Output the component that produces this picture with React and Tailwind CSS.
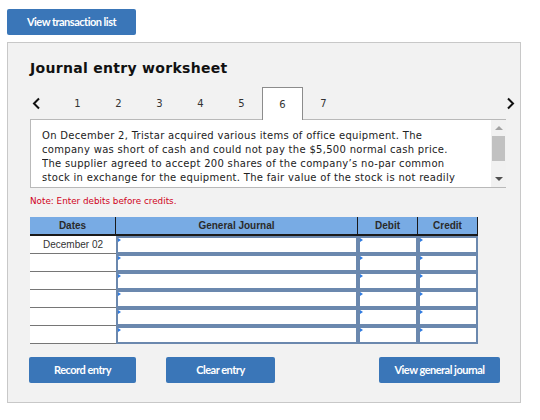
import React from "react";

const tabs = [1, 2, 3, 4, 5, 6, 7];
const rows = ["December 02", "", "", "", "", ""];

const BlueButton = ({ children, className }) => (
  <button
    className={`h-[26px] rounded-[2px] bg-[#3a76b8] text-white text-[11px] font-bold tracking-[-0.5px] font-['Lato',sans-serif] ${className}`}
  >
    {children}
  </button>
);

const InputCell = ({ className }) => (
  <div className={`relative h-[18px] border-2 border-[#6b88ae] bg-white ${className}`}>
    <span className="absolute left-0 top-0 w-0 h-0 border-t-[2px] border-b-[2px] border-l-[3px] border-t-transparent border-b-transparent border-l-[#2f7be0]" />
  </div>
);

export default function App() {
  return (
    <div className="w-[540px] h-[420px] bg-white font-['DejaVu_Sans',sans-serif] text-[#222]">
      <div className="pt-[9px] pl-[7px]">
        <BlueButton className="w-[129px]">View transaction list</BlueButton>
      </div>

      <div className="ml-[7px] mt-[7px] w-[514px] h-[361px] border border-[#c8c8c8] bg-[#f2f2f2] pl-[22px] pt-[16px]">
        <h1 className="h-[18px] leading-[18px] text-[14px] font-bold text-[#111] tracking-[0.3px]">
          Journal entry worksheet
        </h1>

        {/* tabs */}
        <div className="mt-[10px] flex items-stretch h-[32px] w-[485px]">
          <div className="w-[27px] flex items-center pl-[2px]">
            <svg width="9" height="13" viewBox="0 0 9 13">
              <path d="M7 1.5 L2 6.5 L7 11.5" fill="none" stroke="#111" strokeWidth="2" />
            </svg>
          </div>
          {tabs.map((t) => (
            <div
              key={t}
              className={`w-[41px] flex items-center justify-center text-[10px] text-[#333] ${
                t === 6 ? "border border-b-0 border-[#8c8c8c] bg-white relative z-10 -mb-px" : ""
              }`}
            >
              {t}
            </div>
          ))}
          <div className="flex-1 flex items-center justify-end">
            <svg width="9" height="13" viewBox="0 0 9 13">
              <path d="M2 1.5 L7 6.5 L2 11.5" fill="none" stroke="#111" strokeWidth="2" />
            </svg>
          </div>
        </div>

        {/* text box */}
        <div className="w-[476px] h-[69px] flex border-t border-b border-[#b9b9b9]">
          <div className="flex-1 bg-white border-l border-[#b9b9b9] pl-[11px] pr-[32px] pt-[9px]">
            <p className="h-[56px] overflow-hidden text-[10px] tracking-[0.3px] leading-[14px] text-[#222]">
              On December 2, Tristar acquired various items of office equipment. The company was short of cash and could not pay the $5,500 normal cash price. The supplier agreed to accept 200 shares of the company’s no-par common stock in exchange for the equipment. The fair value of the stock is not readily determinable, but the equipment has a list price of $5,300.
            </p>
          </div>
          <div className="w-[15px] bg-[#f1f1f1] flex flex-col items-center">
            <div className="h-[16px] flex items-center justify-center">
              <span className="w-0 h-0 border-l-[4px] border-r-[4px] border-b-[4px] border-l-transparent border-r-transparent border-b-[#a3a3a3]" />
            </div>
            <div className="w-[13px] h-[25px] bg-[#c1c1c1]" />
            <div className="flex-1" />
            <div className="h-[16px] flex items-center justify-center">
              <span className="w-0 h-0 border-l-[4px] border-r-[4px] border-t-[4px] border-l-transparent border-r-transparent border-t-[#505050]" />
            </div>
          </div>
        </div>

        <p className="mt-[7px] h-[12px] leading-[12px] text-[8.8px] text-[#d0021b]">
          Note: Enter debits before credits.
        </p>

        {/* journal table */}
        <div className="mt-[10px] w-[448px] font-['Liberation_Sans',sans-serif] text-[10px]">
          <div className="flex h-[19px] bg-[#78abe4] border-b-2 border-r border-[#1a1a1a] text-[#2a2a2a] font-bold">
            <div className="w-[86px] flex items-center justify-center border-r border-[#1a1a1a]">Dates</div>
            <div className="w-[242px] flex items-center justify-center border-r border-[#1a1a1a]">General Journal</div>
            <div className="w-[60px] flex items-center justify-center border-r border-[#1a1a1a]">Debit</div>
            <div className="flex-1 flex items-center justify-center">Credit</div>
          </div>
          {rows.map((d, i) => (
            <div key={i} className="flex h-[18px]">
              <div className="w-[86px] bg-white border-b border-[#767676] flex items-center justify-center text-[#333] leading-none">
                {d}
              </div>
              <InputCell className="w-[242px]" />
              <InputCell className="w-[60px]" />
              <InputCell className="w-[60px]" />
            </div>
          ))}
        </div>

        {/* actions */}
        <div className="mt-[13px] w-[470px] flex">
          <BlueButton className="w-[107px] -ml-[1px]">Record entry</BlueButton>
          <BlueButton className="w-[109px] ml-[30px]">Clear entry</BlueButton>
          <BlueButton className="w-[121px] ml-auto">View general journal</BlueButton>
        </div>
      </div>
    </div>
  );
}
